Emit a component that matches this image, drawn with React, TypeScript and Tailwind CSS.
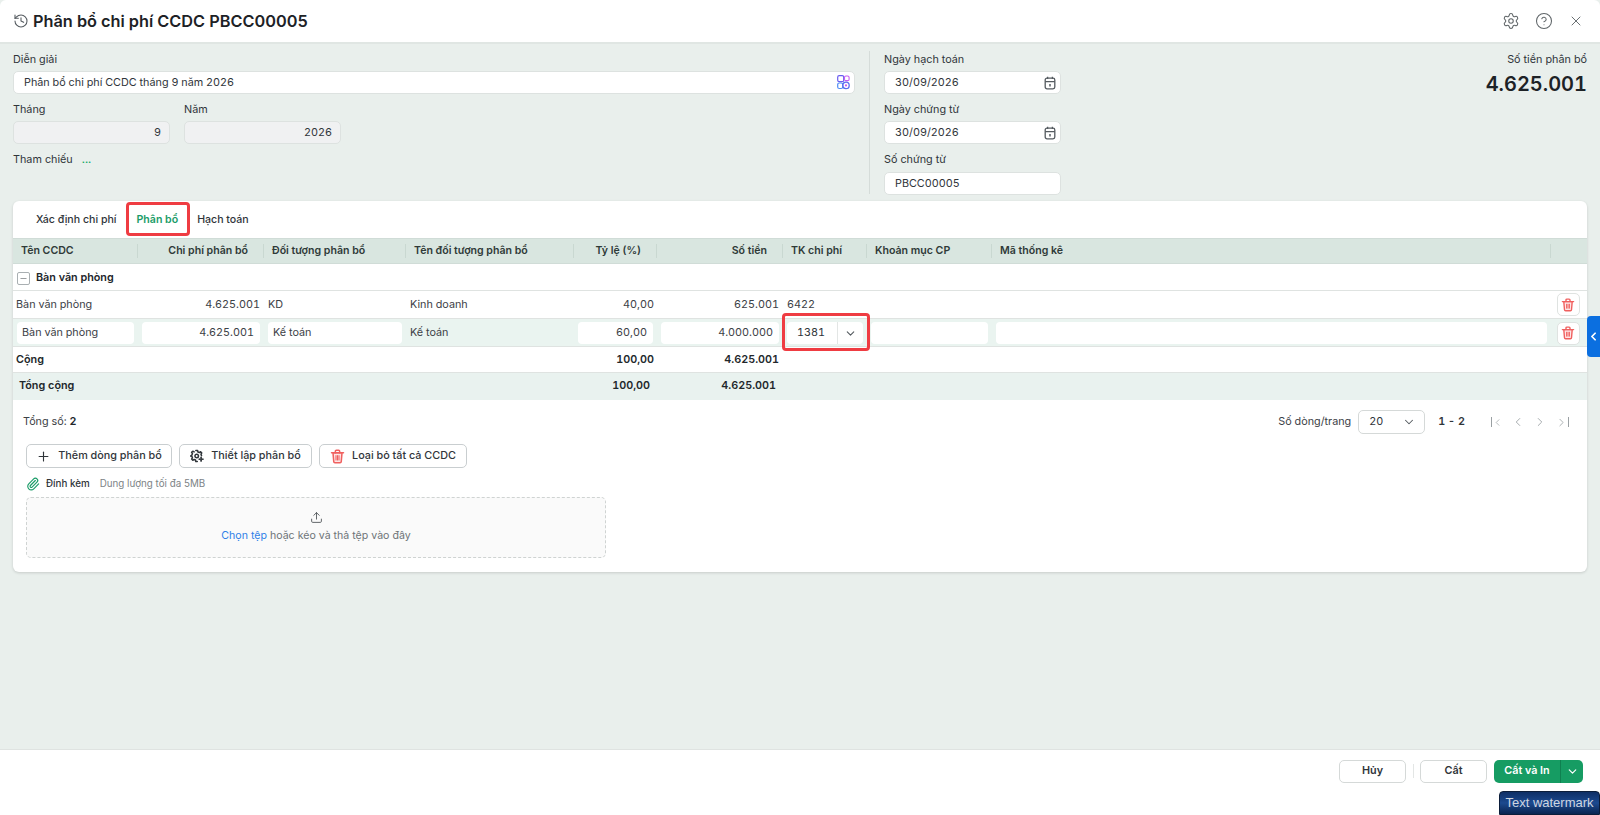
import React from "react";
import { History, Settings, CircleHelp, X, Minus, Plus, ChevronDown, ChevronLeft, ChevronRight, Paperclip, Upload } from "lucide-react";

const GRID = "grid grid-cols-[125px_126px_142px_168px_83px_126px_84px_125px_559px_36px]";

function Field({ value, right, icon, w, muted }: { value: string; right?: boolean; icon?: React.ReactNode; w: string; muted?: boolean }) {
  return (
    <div className={`${w} h-[23px] flex items-center rounded-[5px] border border-[#dde2e0] pl-[10px] ${icon ? "pr-[4px]" : "pr-[8px]"} text-[10.8px] tabular-nums text-[#30353a] ${muted ? "bg-[#f0f1f2]" : "bg-white"} ${right ? "justify-end" : "justify-between"}`}>
      <span className="pt-[2px]">{value}</span>
      {icon}
    </div>
  );
}

function Label({ children, className = "" }: { children: React.ReactNode; className?: string }) {
  return <div className={`text-[10.8px] leading-[16px] pt-[1px] -mb-[1px] text-[#30353a] ${className}`}>{children}</div>;
}

function Cal() {
  return (
    <svg width="12" height="14" viewBox="0 0 12 14" fill="none" stroke="#555b60" strokeWidth="1.3">
      <rect x="1.2" y="2.2" width="9.6" height="10.6" rx="1.8" />
      <path d="M1.2 5.6h9.6M3.6 0.8v2.2M8.4 0.8v2.2" />
      <path d="M6 8v2.6" strokeWidth="1.5" />
    </svg>
  );
}

function CellInput({ value, right }: { value?: string; right?: boolean }) {
  return (
    <div className="px-1 py-[3px] h-full">
      <div className={`h-[22px] rounded-[4px] bg-white flex items-center pl-[5px] pr-[6px] text-[10.8px] tabular-nums text-[#3c4146] ${right ? "justify-end" : ""}`}>{value}</div>
    </div>
  );
}

function Head({ children, right, last }: { children?: React.ReactNode; right?: boolean; last?: boolean }) {
  return (
    <div className="relative flex items-center h-full px-2">
      <span className={`w-full text-[10.6px] font-semibold text-[#2f3a38] ${right ? "text-right pr-2" : ""}`}>{children}</span>
      {!last && <span className="absolute right-0 top-[5px] bottom-[5px] w-px bg-[#c9d8d1]" />}
    </div>
  );
}

function Text({ children, right, bold, pr, flat }: { children?: React.ReactNode; right?: boolean; bold?: boolean; pr?: string; flat?: boolean }) {
  return (
    <div className={`flex items-center ${flat ? "" : "pt-[2px]"} ${right ? "justify-end" : ""} ${pr ?? "px-1"} text-[10.8px] tabular-nums ${bold ? "font-semibold text-[#22272b]" : "text-[#3c4146]"}`}>
      {children}
    </div>
  );
}

function TrashIcon({ size = 14 }: { size?: number }) {
  return (
    <svg width={size} height={size} viewBox="0 0 14 14" fill="#fde6e6" stroke="#f0605f" strokeWidth="1.4" strokeLinecap="round" strokeLinejoin="round">
      <path d="M2.8 3.6l.7 8.2c.05.6.5 1 1.1 1h4.8c.6 0 1.05-.4 1.1-1l.7-8.2z" />
      <path d="M1.4 3.6h11.2" fill="none" />
      <path d="M5 3.4V2c0-.5.4-.9.9-.9h2.2c.5 0 .9.4.9.9v1.4" fill="none" />
      <path d="M5.6 6.2v4M8.4 6.2v4M7 6.2v4" fill="none" strokeWidth="1" />
    </svg>
  );
}

function TrashBtn() {
  return (
    <div className="flex items-center justify-center">
      <div className="w-[23px] h-[23px] -ml-[2px] rounded-[5px] border border-[#dfe3e1] bg-white flex items-center justify-center">
        <TrashIcon />
      </div>
    </div>
  );
}

function ActionBtn({ icon, label, w }: { icon: React.ReactNode; label: string; w: string }) {
  return (
    <div className={`${w} h-[24px] flex items-center justify-center gap-[7px] rounded-[5px] border border-[#c9ced0] bg-white text-[10.8px] font-medium text-[#30353a]`}>
      {icon}
      <span>{label}</span>
    </div>
  );
}

function AiIcon() {
  return (
    <svg width="13" height="15" viewBox="0 0 13 15" fill="none">
      <rect x="0.7" y="0.7" width="6" height="6" rx="1.5" stroke="#6a5cf0" strokeWidth="1.2" />
      <rect x="7.5" y="1" width="4.6" height="4.6" rx="1.4" stroke="#c65cf0" strokeWidth="1.1" />
      <rect x="0.7" y="8" width="5" height="5.5" rx="1.5" stroke="#4f8df5" strokeWidth="1.2" />
      <circle cx="9" cy="10.4" r="3.2" stroke="#5a6cf0" strokeWidth="1.3" />
      <circle cx="9" cy="10.4" r="1.1" fill="#c65cf0" />
    </svg>
  );
}

function GearBadge() {
  return (
    <svg width="14" height="14" viewBox="0 0 24 24" fill="none" stroke="#30353a" strokeWidth="2.6" strokeLinecap="round" strokeLinejoin="round">
      <path d="M10 2.5h3l.6 2.6 2.3 1 2.3-1.4 2 2.1-1.4 2.2 1 2.4" />
      <path d="M12.5 21.5H10l-.6-2.6-2.3-1-2.3 1.4-2-2.1 1.4-2.2-1-2.4L.9 12l2.3-1.6 1-2.4L2.8 5.8l2-2.1 2.3 1.4" />
      <circle cx="11.5" cy="12" r="3" />
      <path d="M19 14.5v6M16 17.5h.01M22 17.5h.01" strokeWidth="3" />
    </svg>
  );
}

export default function App() {
  return (
    <div className="relative w-[1600px] h-[815px] overflow-hidden flex flex-col bg-[#e9efec] font-['Inter','Noto_Sans',sans-serif] text-[#22272b]">
      <header className="h-[44px] shrink-0 bg-white border-b-2 border-[#e0e6e3] rounded-t-[6px] flex items-center pl-[13px] pr-[16px]">
        <History size={16} strokeWidth={1.6} className="text-[#555b60] mr-[4px]" />
        <h1 className="text-[16.3px] font-semibold text-[#1d2226]">Phân bổ chi phí CCDC PBCC00005</h1>
        <div className="ml-auto flex items-center gap-[15px] text-[#5f6568]">
          <Settings size={18} strokeWidth={1.4} />
          <CircleHelp size={18} strokeWidth={1.4} />
          <X size={16} strokeWidth={1.4} />
        </div>
      </header>

      <section className="h-[157px] shrink-0 flex px-[13px] pt-[7px]">
        <div className="w-[842px] flex flex-col">
          <Label>Diễn giải</Label>
          <div className="mt-[4px]">
            <Field w="w-[842px]" value="Phân bổ chi phí CCDC tháng 9 năm 2026" icon={<AiIcon />} />
          </div>
          <div className="flex gap-[14px] mt-[7px]">
            <div>
              <Label>Tháng</Label>
              <div className="mt-[4px]"><Field w="w-[157px]" value="9" right muted /></div>
            </div>
            <div>
              <Label>Năm</Label>
              <div className="mt-[4px]"><Field w="w-[157px]" value="2026" right muted /></div>
            </div>
          </div>
          <div className="flex items-center mt-[7px]">
            <Label>Tham chiếu</Label>
            <span className="ml-[9px] text-[9px] font-extrabold leading-none text-[#12a866]">...</span>
          </div>
        </div>
        <div className="w-px h-[143px] bg-[#d5dcd9] ml-[14px] mr-[14px]" />
        <div className="w-[177px] flex flex-col">
          <Label>Ngày hạch toán</Label>
          <div className="mt-[4px]"><Field w="w-[177px]" value="30/09/2026" icon={<Cal />} /></div>
          <Label className="mt-[7px]">Ngày chứng từ</Label>
          <div className="mt-[4px]"><Field w="w-[177px]" value="30/09/2026" icon={<Cal />} /></div>
          <Label className="mt-[7px]">Số chứng từ</Label>
          <div className="mt-[5px]"><Field w="w-[177px]" value="PBCC00005" /></div>
        </div>
        <div className="flex-1 flex flex-col items-end">
          <Label>Số tiền phân bổ</Label>
          <div className="mt-[3px] text-[20px] leading-[28px] font-semibold tabular-nums text-[#1d2226]">4.625.001</div>
        </div>
      </section>

      <main className="mx-[13px] h-[371px] shrink-0 bg-white rounded-[6px] shadow-[0_1px_3px_rgba(0,0,0,0.15)] flex flex-col">
        <div className="h-[37px] shrink-0 flex items-center text-[10.6px] font-medium text-[#30353a]">
          <span className="ml-[23px]">Xác định chi phí</span>
          <span className="relative ml-[20px] font-semibold text-[#1a9c68]">
            Phân bổ
            <span className="absolute -left-[11px] -right-[12px] -top-[10px] -bottom-[9px] border-[3px] border-[#ef3c42] rounded-[4px]" />
          </span>
          <span className="ml-[19px]">Hạch toán</span>
        </div>

        <div className={`${GRID} h-[26px] bg-[#d9e6e0] border-y border-[#d0dcd7]`}>
          <Head>Tên CCDC</Head>
          <Head right>Chi phí phân bổ</Head>
          <Head>Đối tượng phân bổ</Head>
          <Head>Tên đối tượng phân bổ</Head>
          <Head right>Tỷ lệ (%)</Head>
          <Head right>Số tiền</Head>
          <Head>TK chi phí</Head>
          <Head>Khoản mục CP</Head>
          <Head>Mã thống kê</Head>
          <Head last />
        </div>

        <div className="h-[27px] flex items-center gap-[6px] pl-[4px] pt-[2px] border-b border-[#dfe3e1] text-[10.8px] font-semibold text-[#22272b]">
          <span className="w-[13px] h-[13px] rounded-[2px] border border-[#a9afb2] flex items-center justify-center">
            <Minus size={9} strokeWidth={1.6} className="text-[#555b60]" />
          </span>
          Bàn văn phòng
        </div>

        <div className={`${GRID} h-[28px] border-b border-[#dfe3e1]`}>
          <Text pr="pl-[3px]">Bàn văn phòng</Text>
          <Text right>4.625.001</Text>
          <Text>KD</Text>
          <Text>Kinh doanh</Text>
          <Text right pr="pr-[3px]">40,00</Text>
          <Text right>625.001</Text>
          <Text>6422</Text>
          <Text />
          <Text />
          <TrashBtn />
        </div>

        <div className={`${GRID} h-[28px] bg-[#eaf4f0] border-b border-[#dfe3e1]`}>
          <CellInput value="Bàn văn phòng" />
          <CellInput value="4.625.001" right />
          <CellInput value="Kế toán" />
          <Text flat>Kế toán</Text>
          <CellInput value="60,00" right />
          <CellInput value="4.000.000" right />
          <div className="relative px-1 py-[3px]">
            <div className="h-[22px] rounded-[4px] bg-white flex items-center text-[10.8px] tabular-nums text-[#30353a]">
              <span className="flex-1 pl-[10px]">1381</span>
              <span className="w-[26px] h-full border-l border-[#e3e6e5] flex items-center justify-center">
                <ChevronDown size={13} strokeWidth={2} className="text-[#555b60]" />
              </span>
            </div>
            <span className="absolute -left-px -right-[3px] -top-[6px] -bottom-[4px] border-[3px] border-[#ef3c42] rounded-[4px]" />
          </div>
          <CellInput />
          <CellInput />
          <TrashBtn />
        </div>

        <div className={`${GRID} h-[26px] border-b border-[#dfe3e1]`}>
          <Text bold pr="pl-[3px]">Cộng</Text>
          <Text /><Text /><Text />
          <Text bold right pr="pr-[3px]">100,00</Text>
          <Text bold right>4.625.001</Text>
          <Text /><Text /><Text /><Text />
        </div>

        <div className={`${GRID} h-[27px] bg-[#e9f2ef]`}>
          <Text flat bold pr="pl-[6px]">Tổng cộng</Text>
          <Text flat /><Text flat /><Text flat />
          <Text flat bold right pr="pr-[7px]">100,00</Text>
          <Text flat bold right pr="pr-[7px]">4.625.001</Text>
          <Text flat /><Text flat /><Text flat /><Text flat />
        </div>

        <div className="h-[44px] shrink-0 flex items-center pl-[10px] pr-[18px] text-[10.8px] tabular-nums text-[#3c4146]">
          <span>Tổng số: <b className="font-semibold text-[#22272b]">2</b></span>
          <span className="ml-auto">Số dòng/trang</span>
          <div className="ml-[7px] w-[67px] h-[24px] rounded-[5px] border border-[#d5d9d8] flex items-center justify-between pl-[10px] pr-[8px] text-[#30353a]">
            <span>20</span>
            <ChevronDown size={14} strokeWidth={1.8} className="text-[#555b60]" />
          </div>
          <span className="ml-[13px] font-semibold text-[#30353a]">1 - 2</span>
          <div className="ml-[24px] flex items-center gap-[8px] text-[#9aa0a3]">
            <span className="flex items-center w-[14px]"><span className="w-px h-[10px] bg-[#9aa0a3] ml-[2px]" /><ChevronLeft size={13} strokeWidth={1.5} /></span>
            <ChevronLeft size={14} strokeWidth={1.5} />
            <ChevronRight size={14} strokeWidth={1.5} />
            <span className="flex items-center w-[14px]"><ChevronRight size={13} strokeWidth={1.5} /><span className="w-px h-[10px] bg-[#9aa0a3]" /></span>
          </div>
        </div>

        <div className="flex gap-[7px] pl-[13px]">
          <ActionBtn w="w-[146px]" icon={<Plus size={15} strokeWidth={1.8} />} label="Thêm dòng phân bổ" />
          <ActionBtn w="w-[133px]" icon={<GearBadge />} label="Thiết lập phân bổ" />
          <ActionBtn w="w-[148px]" icon={<TrashIcon size={15} />} label="Loại bỏ tất cả CCDC" />
        </div>

        <div className="flex items-center pl-[13px] mt-[9px] h-[14px] text-[9.8px]">
          <Paperclip size={14} strokeWidth={2} className="text-[#1a9c68] mr-[6px]" />
          <span className="font-medium text-[#30353a]">Đính kèm</span>
          <span className="ml-[10px] text-[#7d8386]">Dung lượng tối đa 5MB</span>
        </div>

        <div className="ml-[13px] mt-[6px] w-[580px] h-[61px] rounded-[5px] border border-dashed border-[#cfd3d2] bg-[#fafafa] flex flex-col items-center justify-center gap-[4px] text-[10.6px] text-[#6e7478]">
          <Upload size={13} strokeWidth={1.6} className="text-[#4a5054]" />
          <span><span className="text-[#2f7fe8]">Chọn tệp</span> hoặc kéo và thả tệp vào đây</span>
        </div>
      </main>

      <div className="flex-1" />

      <footer className="relative h-[66px] shrink-0 bg-white border-t border-[#dfe3e1] flex items-start justify-end pt-[10px] pr-[17px] text-[10.8px] font-semibold">
        <div className="w-[67px] h-[23px] rounded-[5px] border border-[#d5d9d8] flex items-center justify-center text-[#30353a]">Hủy</div>
        <div className="ml-[7px] mr-[6px] mt-[4px] w-px h-[14px] bg-[#e3e6e5]" />
        <div className="w-[67px] h-[23px] rounded-[5px] border border-[#d5d9d8] flex items-center justify-center text-[#30353a]">Cất</div>
        <div className="ml-[7px] h-[23px] rounded-[5px] bg-[#169c63] text-white flex items-center">
          <span className="w-[66px] text-center">Cất và In</span>
          <span className="w-[23px] h-full border-l border-[#0f8050] flex items-center justify-center">
            <ChevronDown size={13} strokeWidth={2.2} />
          </span>
        </div>
        <div className="absolute right-0 bottom-0 w-[101px] h-[24px] rounded-t-[4px] border border-[#0b1d3a] bg-gradient-to-b from-[#0e2f66] via-[#1c4a8f] to-[#0a2450] flex items-center justify-center font-['Liberation_Sans',sans-serif] text-[13px] font-normal text-[#cfd6e0]">
          Text watermark
        </div>
      </footer>

      <div className="absolute right-0 top-[316px] w-[13px] h-[41px] rounded-l-[4px] bg-[#0b6fe0] flex items-center justify-center">
        <ChevronLeft size={13} strokeWidth={3.2} className="text-white" />
      </div>
    </div>
  );
}
